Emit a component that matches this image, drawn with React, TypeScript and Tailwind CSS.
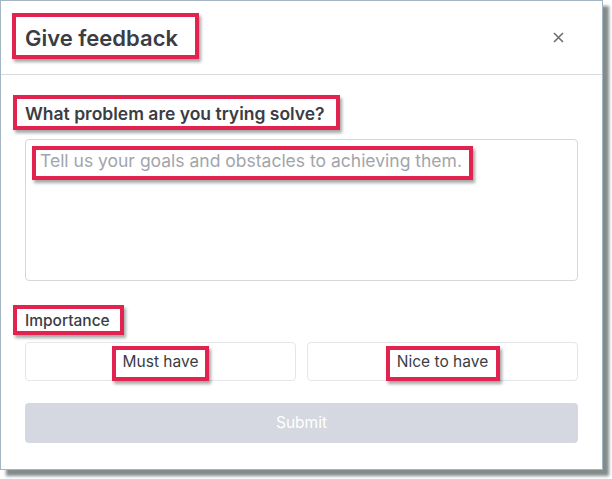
import React from "react";

// red annotation frame drawn over a piece of text
const Mark = ({ className }: { className: string }) => (
  <span
    className={`pointer-events-none absolute border-4 border-[#e2224f] shadow-[2px_3px_3px_rgba(0,0,0,0.35)] ${className}`}
  />
);

const App = () => {
  return (
    <div className="h-[479px] w-[612px] bg-white font-['Inter','Liberation_Sans',sans-serif] text-[#3a3d44]">
      <div className="h-[470px] w-[603px] border border-[#a3b6c1] bg-white shadow-[6px_6px_3px_rgba(90,100,100,0.75)]">
        <div className="flex h-[74px] items-center justify-between border-b border-[#d7dadf] pl-6 pr-[38px]">
          <h2 className="relative text-[22px] font-semibold leading-7">
            Give feedback
            <Mark className="-top-[11px] -bottom-[7px] -left-[13px] -right-[21px]" />
          </h2>
          <button className="text-[#6b6e74]">
            <svg width="11" height="11" viewBox="0 0 11 11" fill="none" stroke="currentColor" strokeWidth="1.6">
              <path d="M1 1l9 9M10 1l-9 9" />
            </svg>
          </button>
        </div>

        <div className="px-6">
          <div className="mt-[27px]">
            <span className="relative inline-block text-[17.5px] font-semibold leading-6">
              What problem are you trying solve?
              <Mark className="-top-[7px] -bottom-[4px] -left-[12px] -right-[15px]" />
            </span>
          </div>

          <div className="relative mt-[13px]">
            <textarea
              className="block h-[142px] w-full resize-none rounded border border-[#d5d7db] px-[14px] py-[9px] text-[17.5px] leading-6 text-[#3a3d44] placeholder:text-[#a2a5ab] focus:outline-none"
              placeholder="Tell us your goals and obstacles to achieving them."
            />
            <Mark className="left-[7px] top-[7px] h-[34px] w-[441px]" />
          </div>

          <div className="mt-[27px]">
            <span className="relative inline-block text-[15.5px] font-medium leading-5">
              Importance
              <Mark className="-top-[6px] -bottom-[4px] -left-[12px] -right-[14px]" />
            </span>
          </div>

          <div className="mt-[10px] grid grid-cols-2 gap-[11px]">
            <button className="flex h-[39px] items-center justify-center rounded border border-[#e4e6e9] bg-white text-[15.5px]">
              <span className="relative inline-block leading-5">
                Must have
                <Mark className="-top-[6px] -bottom-[9px] -left-[11px] -right-[11px]" />
              </span>
            </button>
            <button className="flex h-[39px] items-center justify-center rounded border border-[#e4e6e9] bg-white text-[15.5px]">
              <span className="relative inline-block leading-5">
                Nice to have
                <Mark className="-top-[6px] -bottom-[9px] -left-[11px] -right-[12px]" />
              </span>
            </button>
          </div>

          <button
            disabled
            className="mt-[22px] flex h-10 w-full items-center justify-center rounded bg-[#d5d8e0] text-[15.5px] text-white"
          >
            Submit
          </button>
        </div>
      </div>
    </div>
  );
};

export default App;
